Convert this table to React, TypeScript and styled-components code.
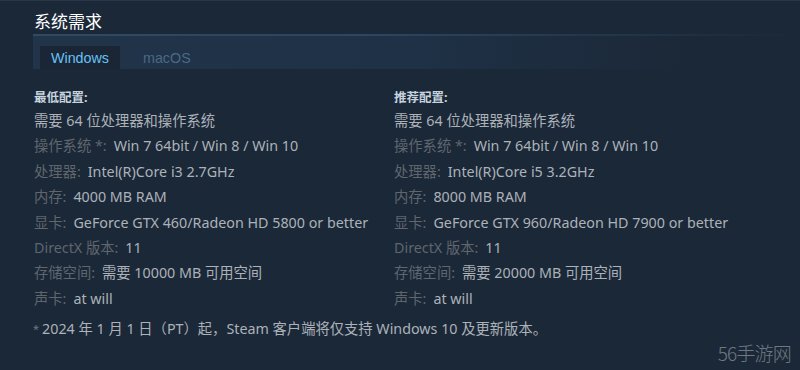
import styled, { createGlobalStyle } from "styled-components";

const Global = createGlobalStyle`
  html, body {
    margin: 0;
    background: #1b2838;
  }
  body {
    font-family: "Noto Sans", "Noto Sans CJK SC", sans-serif;
  }
`

const Page = styled.div`
  width: 800px;
  height: 370px;
  box-sizing: border-box;
  padding: 9px 0 0 33px;
  background: #1b2838;
  border-top: 1px solid #2a3748;
  position: relative;
  overflow: hidden;
`

const Title = styled.h2`
  margin: 0;
  padding-left: 1px;
  font-size: 17px;
  font-weight: 400;
  line-height: 24px;
  color: #ffffff;
  border-bottom: 2px solid;
  border-image: linear-gradient(to right, #2e4b63 0%, #2b4660 45%, rgba(27, 40, 56, 0) 100%) 1;
`

const TabBar = styled.div`
  display: flex;
  align-items: flex-end;
  gap: 12px;
  height: 33px;
  padding-left: 7px;
  background: linear-gradient(to right, #213449 0%, #1f3146 50%, rgba(27, 40, 56, 0) 85%);
`

const Tab = styled.div<{ $active?: boolean }>`
  height: 23px;
  padding: 0 11px;
  display: flex;
  align-items: center;
  font-family: "Liberation Sans", Arial, sans-serif;
  font-size: 14.3px;
  color: ${p => (p.$active ? "#67c1f5" : "#4a6a83")};
  background: ${p => (p.$active ? "#1a2636" : "transparent")};
`

const Columns = styled.div`
  display: grid;
  grid-template-columns: 360px 360px;
  margin-top: 19px;
  padding-left: 1px;
`

const Column = styled.div`
  display: flex;
  flex-direction: column;
`

const Heading = styled.div`
  font-size: 12.5px;
  font-weight: 700;
  line-height: 20px;
  height: 20px;
  color: #c6d4df;
`

const Row = styled.div`
  font-size: 14.3px;
  line-height: 25.4px;
  color: #acb2b8;
  white-space: nowrap;
`

const Label = styled.span`
  color: #5f666d;
  margin-right: 7px;
`

const Note = styled.div`
  margin-top: 8px;
  font-size: 14.3px;
  line-height: 20px;
  color: #acb2b8;
`

const Star = styled.span`
  color: #6b7785;
  font-size: 11px;
  vertical-align: top;
  margin-right: 3px;
`

const Watermark = styled.div`
  position: absolute;
  right: 9px;
  bottom: 4px;
  font-family: "Noto Sans CJK SC", sans-serif;
  font-weight: 300;
  font-size: 19px;
  letter-spacing: -0.8px;
  color: #6f7882;
`

type Spec = [string, string]

const minimum: Spec[] = [
  ["操作系统 *:", "Win 7 64bit / Win 8 / Win 10"],
  ["处理器:", "Intel(R)Core i3 2.7GHz"],
  ["内存:", "4000 MB RAM"],
  ["显卡:", "GeForce GTX 460/Radeon HD 5800 or better"],
  ["DirectX 版本:", "11"],
  ["存储空间:", "需要 10000 MB 可用空间"],
  ["声卡:", "at will"],
]

const recommended: Spec[] = [
  ["操作系统 *:", "Win 7 64bit / Win 8 / Win 10"],
  ["处理器:", "Intel(R)Core i5 3.2GHz"],
  ["内存:", "8000 MB RAM"],
  ["显卡:", "GeForce GTX 960/Radeon HD 7900 or better"],
  ["DirectX 版本:", "11"],
  ["存储空间:", "需要 20000 MB 可用空间"],
  ["声卡:", "at will"],
]

const SpecColumn = ({ title, specs }: { title: string; specs: Spec[] }) => (
  <Column>
    <Heading>{title}</Heading>
    <Row>需要 64 位处理器和操作系统</Row>
    {specs.map(([label, value]) => (
      <Row key={label}>
        <Label>{label}</Label>
        {value}
      </Row>
    ))}
  </Column>
)

const App = () => (
  <Page>
    <Global />
    <Title>系统需求</Title>
    <TabBar>
      <Tab $active>Windows</Tab>
      <Tab>macOS</Tab>
    </TabBar>
    <Columns>
      <SpecColumn title="最低配置:" specs={minimum} />
      <SpecColumn title="推荐配置:" specs={recommended} />
    </Columns>
    <Note>
      <Star>*</Star>2024 年 1 月 1 日（PT）起，Steam 客户端将仅支持 Windows 10 及更新版本。
    </Note>
    <Watermark>56手游网</Watermark>
  </Page>
)

export default App
